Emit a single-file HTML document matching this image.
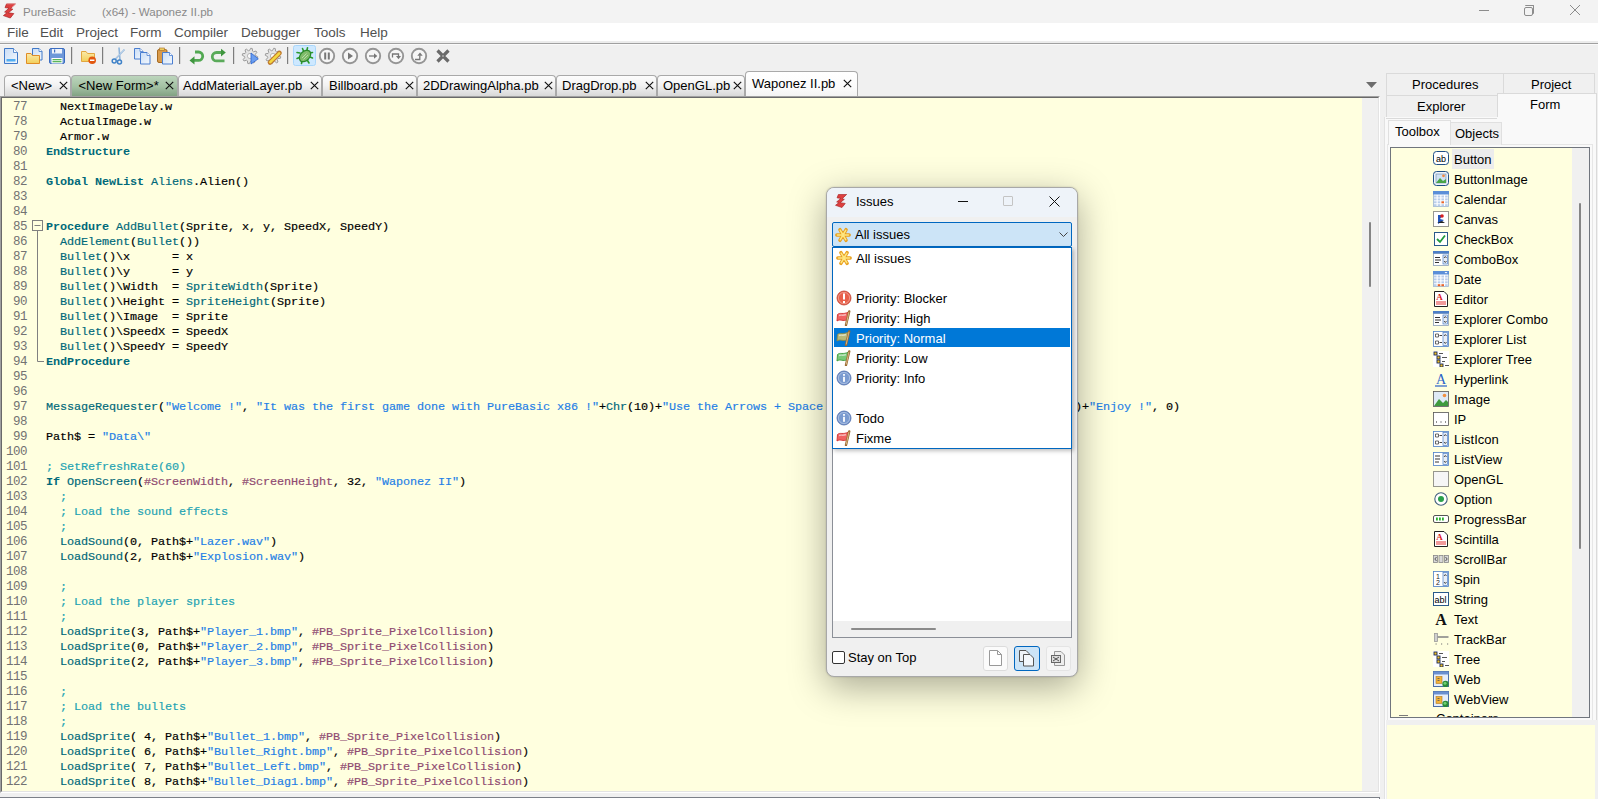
<!DOCTYPE html>
<html><head><meta charset="utf-8">
<style>
*{margin:0;padding:0;box-sizing:border-box}
html,body{width:1598px;height:799px;overflow:hidden;background:#f0f0f0;font-family:"Liberation Sans",sans-serif;font-size:13px;color:#000}
div,span,svg{position:absolute}
.tb{white-space:pre}
#title{left:0;top:0;width:1598px;height:23px;background:#f3f3f3}
#menu{left:0;top:23px;width:1598px;height:21px;background:linear-gradient(#fff 0,#fff 18px,#ececec 18px);border-bottom:1px solid #a0a0a0;box-shadow:0 1px 0 #fafafa}
.mi{top:2px;font-size:13.5px;color:#505050;white-space:pre}
.sep{top:49px;width:1px;height:15px;background:#8a8a8a}
.tab{top:75px;height:22px;border:1px solid #a9a9a9;border-bottom:none;border-radius:4px 4px 0 0;background:linear-gradient(#fdfdfd 0%,#f2f2f2 45%,#d6d6d6 100%);font-size:13px;white-space:pre}
.tab span{top:3px;white-space:pre}
.tab .x{top:3px;font-size:12px}
#edb{left:0;top:96px;width:1380px;height:697px;border:1px solid #a0a0a0;border-right-color:#fff;border-bottom-color:#fff;background:#f0f0f0}
#edb2{left:1px;top:97px;width:1378px;height:695px;border:1px solid #696969;border-right-color:#e3e3e3;border-bottom-color:#e3e3e3;background:#f0f0f0}
#code{left:2px;top:98px;width:1360px;height:693px;background:#ffffdf;overflow:hidden}
.cl{left:44px;height:15px;font-family:"Liberation Mono",monospace;font-size:11.8px;letter-spacing:-0.08px;-webkit-text-stroke:0.18px;line-height:15px;white-space:pre;color:#000}
.ln{left:0;width:25px;text-align:right;height:15px;font-family:"Liberation Mono",monospace;font-size:12.5px;letter-spacing:-0.5px;line-height:15px;color:#727272}
.k{color:#00697a;font-weight:bold;position:static;-webkit-text-stroke:0}
.f{color:#00697a;position:static}
.s{color:#1f7fe6;position:static}
.c{color:#1ea3b3;position:static}
.p{color:#8e4a70;position:static}
.rtab{height:22px;border:1px solid #dadada;background:#f0f0f0;font-size:13px;white-space:pre}
.ti{left:1432px;height:20px;width:150px}
.tic{left:0;top:2px;width:16px;height:16px}
.tt{left:22px;top:3px;font-size:13px;white-space:pre}
#dlg{left:826px;top:187px;width:252px;height:490px;background:#f0f0f0;border:1px solid #a8a8a8;border-radius:8px;box-shadow:0 0 2px rgba(0,0,0,0.2),0 10px 36px rgba(0,0,0,0.34);overflow:hidden}
.dli{left:5px;height:20px;width:236px;font-size:13px}
.dli span{left:23px;top:3px;white-space:pre}
.dli svg{left:2px;top:2px}
</style></head><body>
<div id="title">
<svg style="left:0;top:0" width="18" height="20" viewBox="0 0 18 20"><path d="M6.5 4 L15.3 4 L10.5 8.6 L12.8 9.2 L8.3 12.8 L13.8 13.6 L10.3 18 L3.4 15.6 L7.2 12.6 L4.6 12 L9 8.2 L5 7.6 Z" fill="#de4040" stroke="#a82020" stroke-width="0.7" stroke-linejoin="round"/><path d="M6.5 4 L15.3 4 L12 7" fill="none" stroke="#f08080" stroke-width="0.8"/></svg>
<span class="tb" style="left:23px;top:5px;font-size:11.6px;color:#8a8a8a">PureBasic</span>
<span class="tb" style="left:102px;top:5px;font-size:11.6px;color:#8a8a8a">(x64) - Waponez II.pb</span>
<div style="left:1479px;top:10px;width:10px;height:1px;background:#8c8c8c"></div>
<div style="left:1524px;top:7px;width:9px;height:9px;border:1px solid #8c8c8c;border-radius:2px"></div>
<div style="left:1525px;top:5px;width:9px;height:9px;border-top:1px solid #8c8c8c;border-right:1px solid #8c8c8c;border-radius:1px"></div>
<svg style="left:1570px;top:5px" width="10" height="10"><path d="M0 0 L10 10 M10 0 L0 10" stroke="#8c8c8c" stroke-width="1"/></svg>
</div>
<div id="menu">
<span class="mi" style="left:7px">File</span><span class="mi" style="left:40px">Edit</span><span class="mi" style="left:76px">Project</span><span class="mi" style="left:130px">Form</span><span class="mi" style="left:174px">Compiler</span><span class="mi" style="left:241px">Debugger</span><span class="mi" style="left:314px">Tools</span><span class="mi" style="left:360px">Help</span>
</div>
<svg style="left:0;top:44px" width="460" height="26" viewBox="0 44 460 26">
<defs><linearGradient id="gdoc" x1="0" y1="0" x2="1" y2="1"><stop offset="0" stop-color="#c9ddf6"/><stop offset="1" stop-color="#f4f8fd"/></linearGradient>
<linearGradient id="gfold" x1="0" y1="0" x2="0" y2="1"><stop offset="0" stop-color="#fbeaa8"/><stop offset="1" stop-color="#f2cf5a"/></linearGradient></defs>
<path d="M4.5 48.5 H13.5 L17.5 52.5 V63.5 H4.5 Z" fill="url(#gdoc)" stroke="#3f78c8"/><path d="M13.5 48.5 V52.5 H17.5" fill="#fff" stroke="#3f78c8" stroke-width="0.8"/>
<rect x="6.5" y="59" width="9" height="2.5" fill="#52aef2"/>
<path d="M32.5 48.5 H39.0 L42.0 51.5 V60.0 H32.5 Z" fill="url(#gdoc)" stroke="#3f78c8"/><path d="M39.0 48.5 V51.5 H42.0" fill="#fff" stroke="#3f78c8" stroke-width="0.8"/>
<path d="M26.5 53.5 H31 L32.5 55.5 H39.5 V63.5 H26.5 Z" fill="url(#gfold)" stroke="#e08c26"/>
<rect x="49.5" y="48.5" width="15" height="15" rx="1.5" fill="#6d98d9" stroke="#3b6cc0"/>
<rect x="52" y="49" width="10" height="4.5" fill="#eef3fb"/><rect x="54" y="49.5" width="1.2" height="3" fill="#3b6cc0"/>
<rect x="51.5" y="58" width="11" height="5.5" fill="#fff"/><rect x="52.5" y="59" width="9" height="1.3" fill="#5bb55b"/><rect x="52.5" y="61" width="9" height="1.3" fill="#5bb55b"/>
<rect x="71" y="47" width="1.2" height="17" fill="#7d7d7d"/>
<rect x="102" y="47" width="1.2" height="17" fill="#7d7d7d"/>
<rect x="179" y="47" width="1.2" height="17" fill="#7d7d7d"/>
<rect x="233" y="47" width="1.2" height="17" fill="#7d7d7d"/>
<rect x="287" y="47" width="1.2" height="17" fill="#7d7d7d"/>
<path d="M81.5 51.5 H86 L87.5 53.5 H94.5 V61.5 H81.5 Z" fill="url(#gfold)" stroke="#e2a640"/>
<circle cx="92.2" cy="60.2" r="3.8" fill="#e2570f"/><rect x="90" y="59.5" width="4.4" height="1.5" fill="#fff"/>
<path d="M115 59.5 L124.5 49.5 M120 60 L119 47.5" stroke="#8fb4da" stroke-width="1.6"/><path d="M115 59.5 L124.5 49.5" stroke="#d8e6f4" stroke-width="0.6"/>
<circle cx="114.2" cy="61" r="2" fill="none" stroke="#3f82c8" stroke-width="1.5"/><circle cx="119.5" cy="62" r="2" fill="none" stroke="#3f82c8" stroke-width="1.5"/>
<path d="M134.5 48.5 H140.0 L143.0 51.5 V59.0 H134.5 Z" fill="url(#gdoc)" stroke="#4a7ed0"/><path d="M140.0 48.5 V51.5 H143.0" fill="#fff" stroke="#4a7ed0" stroke-width="0.8"/>
<path d="M140.5 52.5 H147.0 L150.0 55.5 V64.0 H140.5 Z" fill="url(#gdoc)" stroke="#4a7ed0"/><path d="M147.0 52.5 V55.5 H150.0" fill="#fff" stroke="#4a7ed0" stroke-width="0.8"/>
<rect x="157.5" y="49.5" width="9.5" height="13" rx="1.5" fill="#d99a4a" stroke="#a56a22"/><rect x="159.5" y="48" width="5" height="2.5" fill="#eccd62" stroke="#a56a22" stroke-width="0.6"/>
<path d="M162.5 52.5 H169.5 L172.5 55.5 V64.0 H162.5 Z" fill="url(#gdoc)" stroke="#4a7ed0"/><path d="M169.5 52.5 V55.5 H172.5" fill="#fff" stroke="#4a7ed0" stroke-width="0.8"/>
<path d="M195 52 H198.5 A4.2 4.2 0 0 1 198.5 60.4 H194" fill="none" stroke="#52a852" stroke-width="2.8"/><path d="M194.5 56.2 L189.5 60.5 L194.5 64.5 Z" fill="#3f963f"/>
<path d="M222 52.5 H216.5 A4.2 4.2 0 0 0 216.5 60.9 H224.5" fill="none" stroke="#5aaa5a" stroke-width="2.8"/><path d="M221 48.8 L225.8 52.5 L221 56.5 Z" fill="#3f963f"/>
<polygon points="257.76,56.76 257.46,58.26 254.85,58.59 254.25,59.49 254.95,62.03 253.68,62.88 251.60,61.26 250.54,61.47 249.24,63.76 247.74,63.46 247.41,60.85 246.51,60.25 243.97,60.95 243.12,59.68 244.74,57.60 244.53,56.54 242.24,55.24 242.54,53.74 245.15,53.41 245.75,52.51 245.05,49.97 246.32,49.12 248.40,50.74 249.46,50.53 250.76,48.24 252.26,48.54 252.59,51.15 253.49,51.75 256.03,51.05 256.88,52.32 255.26,54.40 255.47,55.46" fill="#e4e4e4" stroke="#9c9c9c" stroke-width="1"/><circle cx="250" cy="56" r="2.6" fill="#fafafa" stroke="#a8a8a8" stroke-width="0.8"/>
<path d="M251 53 L258.3 58.8 L251 64 Z" fill="#6a9ef0" stroke="#2a62d0" stroke-width="0.8"/>
<polygon points="280.76,56.76 280.46,58.26 277.85,58.59 277.25,59.49 277.95,62.03 276.68,62.88 274.60,61.26 273.54,61.47 272.24,63.76 270.74,63.46 270.41,60.85 269.51,60.25 266.97,60.95 266.12,59.68 267.74,57.60 267.53,56.54 265.24,55.24 265.54,53.74 268.15,53.41 268.75,52.51 268.05,49.97 269.32,49.12 271.40,50.74 272.46,50.53 273.76,48.24 275.26,48.54 275.59,51.15 276.49,51.75 279.03,51.05 279.88,52.32 278.26,54.40 278.47,55.46" fill="#e4e4e4" stroke="#9c9c9c" stroke-width="1"/><circle cx="273" cy="56" r="2.6" fill="#fafafa" stroke="#a8a8a8" stroke-width="0.8"/>
<path d="M270 62.5 L279.5 53" stroke="#c07a30" stroke-width="4.6" stroke-linecap="round"/><path d="M270.3 62.2 L279.2 53.3" stroke="#f4d840" stroke-width="2.6" stroke-linecap="round"/>
<rect x="293.5" y="45.5" width="22" height="20" rx="2" fill="#cde8ff" stroke="#a8d6fb"/>
<g stroke="#2a9a2a" stroke-width="1.6" stroke-linecap="round"><path d="M300 53 L297 52.5 M299.5 57.5 L297 58.5 M302 61 L301.5 63.5 M303.5 51 L302.5 48.5 M307 50 L307.5 47.8 M309.5 53 L312.5 52.5 M310 57 L312.5 58 M307.5 60.5 L309 63"/></g>
<ellipse cx="305" cy="56" rx="4.6" ry="6.6" transform="rotate(45 305 56)" fill="#7fba6a" stroke="#2a8a2a" stroke-width="1.3"/><path d="M302 58 L306.5 53.5 M303.5 59.5 L308 55" stroke="#b8e0a8" stroke-width="0.9"/>
<circle cx="327" cy="56" r="7.2" fill="#f6f6f6" stroke="#959595" stroke-width="1.9"/><rect x="324.2" y="52.5" width="2" height="7" fill="#777"/><rect x="327.8" y="52.5" width="2" height="7" fill="#777"/>
<circle cx="350" cy="56" r="7.2" fill="#f6f6f6" stroke="#959595" stroke-width="1.9"/><path d="M348 52.5 L353 56 L348 59.5 Z" fill="#777"/>
<circle cx="373" cy="56" r="7.2" fill="#f6f6f6" stroke="#959595" stroke-width="1.9"/><path d="M369 56 H375.5" stroke="#777" stroke-width="1.3"/><path d="M374 53.3 L377.3 56 L374 58.7 Z" fill="#777"/>
<circle cx="396" cy="56" r="7.2" fill="#f6f6f6" stroke="#959595" stroke-width="1.9"/><path d="M392.5 57.5 V54 H398.5 V56" fill="none" stroke="#777" stroke-width="1.3"/><path d="M396 56 L401 56 L398.5 59.3 Z" fill="#777"/>
<circle cx="419" cy="56" r="7.2" fill="#f6f6f6" stroke="#959595" stroke-width="1.9"/><path d="M415 59.5 H419.8 V55.5" fill="none" stroke="#777" stroke-width="1.3"/><path d="M417.3 55.8 L420 52.5 L422.7 55.8 Z" fill="#777"/>
<path d="M437.5 50.5 L448.5 61.5 M448.5 50.5 L437.5 61.5" stroke="#6a6a6a" stroke-width="3.2"/><rect x="442" y="55" width="2" height="2" fill="#999"/>
</svg>
<div class="tab" style="left:4px;top:75px;width:67.0px;height:22px;"></div>
<span class="tb" style="left:11px;top:78px;font-size:13px">&lt;New&gt;</span>
<svg style="left:58.5px;top:81px" width="9" height="9"><path d="M0.8 0.8 L8.2 8.2 M8.2 0.8 L0.8 8.2" stroke="#111" stroke-width="1.15"/></svg>
<div class="tab" style="left:71px;top:75px;width:106.5px;height:22px;background:linear-gradient(#bcd5bc,#a4c2a4 50%,#7f9f80);"></div>
<span class="tb" style="left:78.5px;top:78px;font-size:13px">&lt;New Form&gt;*</span>
<svg style="left:165px;top:81px" width="9" height="9"><path d="M0.8 0.8 L8.2 8.2 M8.2 0.8 L0.8 8.2" stroke="#111" stroke-width="1.15"/></svg>
<div class="tab" style="left:177.5px;top:75px;width:144.8px;height:22px;"></div>
<span class="tb" style="left:183px;top:78px;font-size:13px">AddMaterialLayer.pb</span>
<svg style="left:309.5px;top:81px" width="9" height="9"><path d="M0.8 0.8 L8.2 8.2 M8.2 0.8 L0.8 8.2" stroke="#111" stroke-width="1.15"/></svg>
<div class="tab" style="left:322.3px;top:75px;width:95.1px;height:22px;"></div>
<span class="tb" style="left:329px;top:78px;font-size:13px">Billboard.pb</span>
<svg style="left:404.5px;top:81px" width="9" height="9"><path d="M0.8 0.8 L8.2 8.2 M8.2 0.8 L0.8 8.2" stroke="#111" stroke-width="1.15"/></svg>
<div class="tab" style="left:417.4px;top:75px;width:138.6px;height:22px;"></div>
<span class="tb" style="left:423px;top:78px;font-size:13px">2DDrawingAlpha.pb</span>
<svg style="left:543.5px;top:81px" width="9" height="9"><path d="M0.8 0.8 L8.2 8.2 M8.2 0.8 L0.8 8.2" stroke="#111" stroke-width="1.15"/></svg>
<div class="tab" style="left:556px;top:75px;width:101.0px;height:22px;"></div>
<span class="tb" style="left:562px;top:78px;font-size:13px">DragDrop.pb</span>
<svg style="left:644.5px;top:81px" width="9" height="9"><path d="M0.8 0.8 L8.2 8.2 M8.2 0.8 L0.8 8.2" stroke="#111" stroke-width="1.15"/></svg>
<div class="tab" style="left:657px;top:75px;width:87.5px;height:22px;"></div>
<span class="tb" style="left:663px;top:78px;font-size:13px">OpenGL.pb</span>
<svg style="left:733px;top:81px" width="9" height="9"><path d="M0.8 0.8 L8.2 8.2 M8.2 0.8 L0.8 8.2" stroke="#111" stroke-width="1.15"/></svg>
<div class="tab" style="left:744.5px;top:71px;width:113.1px;height:26px;background:linear-gradient(#ffffff,#fbfbfb 60%,#f3f3f3);"></div>
<span class="tb" style="left:752px;top:76px;font-size:13px">Waponez II.pb</span>
<svg style="left:843px;top:79px" width="9" height="9"><path d="M0.8 0.8 L8.2 8.2 M8.2 0.8 L0.8 8.2" stroke="#111" stroke-width="1.15"/></svg>
<div id="edb"></div><div id="edb2"></div>
<div id="code">
<div class="ln" style="top:2px">77</div>
<div class="ln" style="top:17px">78</div>
<div class="ln" style="top:32px">79</div>
<div class="ln" style="top:47px">80</div>
<div class="ln" style="top:62px">81</div>
<div class="ln" style="top:77px">82</div>
<div class="ln" style="top:92px">83</div>
<div class="ln" style="top:107px">84</div>
<div class="ln" style="top:122px">85</div>
<div class="ln" style="top:137px">86</div>
<div class="ln" style="top:152px">87</div>
<div class="ln" style="top:167px">88</div>
<div class="ln" style="top:182px">89</div>
<div class="ln" style="top:197px">90</div>
<div class="ln" style="top:212px">91</div>
<div class="ln" style="top:227px">92</div>
<div class="ln" style="top:242px">93</div>
<div class="ln" style="top:257px">94</div>
<div class="ln" style="top:272px">95</div>
<div class="ln" style="top:287px">96</div>
<div class="ln" style="top:302px">97</div>
<div class="ln" style="top:317px">98</div>
<div class="ln" style="top:332px">99</div>
<div class="ln" style="top:347px">100</div>
<div class="ln" style="top:362px">101</div>
<div class="ln" style="top:377px">102</div>
<div class="ln" style="top:392px">103</div>
<div class="ln" style="top:407px">104</div>
<div class="ln" style="top:422px">105</div>
<div class="ln" style="top:437px">106</div>
<div class="ln" style="top:452px">107</div>
<div class="ln" style="top:467px">108</div>
<div class="ln" style="top:482px">109</div>
<div class="ln" style="top:497px">110</div>
<div class="ln" style="top:512px">111</div>
<div class="ln" style="top:527px">112</div>
<div class="ln" style="top:542px">113</div>
<div class="ln" style="top:557px">114</div>
<div class="ln" style="top:572px">115</div>
<div class="ln" style="top:587px">116</div>
<div class="ln" style="top:602px">117</div>
<div class="ln" style="top:617px">118</div>
<div class="ln" style="top:632px">119</div>
<div class="ln" style="top:647px">120</div>
<div class="ln" style="top:662px">121</div>
<div class="ln" style="top:677px">122</div>
<div class="cl" style="top:2px">  NextImageDelay.w</div>
<div class="cl" style="top:17px">  ActualImage.w</div>
<div class="cl" style="top:32px">  Armor.w</div>
<div class="cl" style="top:47px"><span class="k">EndStructure</span></div>
<div class="cl" style="top:62px"></div>
<div class="cl" style="top:77px"><span class="k">Global</span> <span class="k">NewList</span> <span class="f">Aliens</span>.Alien()</div>
<div class="cl" style="top:92px"></div>
<div class="cl" style="top:107px"></div>
<div class="cl" style="top:122px"><span class="k">Procedure</span> <span class="f">AddBullet</span>(Sprite, x, y, SpeedX, SpeedY)</div>
<div class="cl" style="top:137px">  <span class="f">AddElement</span>(<span class="f">Bullet</span>())</div>
<div class="cl" style="top:152px">  <span class="f">Bullet</span>()\x      = x</div>
<div class="cl" style="top:167px">  <span class="f">Bullet</span>()\y      = y</div>
<div class="cl" style="top:182px">  <span class="f">Bullet</span>()\Width  = <span class="f">SpriteWidth</span>(Sprite)</div>
<div class="cl" style="top:197px">  <span class="f">Bullet</span>()\Height = <span class="f">SpriteHeight</span>(Sprite)</div>
<div class="cl" style="top:212px">  <span class="f">Bullet</span>()\Image  = Sprite</div>
<div class="cl" style="top:227px">  <span class="f">Bullet</span>()\SpeedX = SpeedX</div>
<div class="cl" style="top:242px">  <span class="f">Bullet</span>()\SpeedY = SpeedY</div>
<div class="cl" style="top:257px"><span class="k">EndProcedure</span></div>
<div class="cl" style="top:272px"></div>
<div class="cl" style="top:287px"></div>
<div class="cl" style="top:302px"><span class="f">MessageRequester</span>(<span class="s">&quot;Welcome !&quot;</span>, <span class="s">&quot;It was the first game done with PureBasic x86 !&quot;</span>+<span class="f">Chr</span>(10)+<span class="s">&quot;Use the Arrows + Space to shoot at the aliens !!!!&quot;</span>+<span class="f">Chr</span>(10)+<span class="s">&quot;Enjoy !&quot;</span>, 0)</div>
<div class="cl" style="top:317px"></div>
<div class="cl" style="top:332px">Path$ = <span class="s">&quot;Data\&quot;</span></div>
<div class="cl" style="top:347px"></div>
<div class="cl" style="top:362px"><span class="c">; SetRefreshRate(60)</span></div>
<div class="cl" style="top:377px"><span class="k">If</span> <span class="f">OpenScreen</span>(<span class="p">#ScreenWidth</span>, <span class="p">#ScreenHeight</span>, 32, <span class="s">&quot;Waponez II&quot;</span>)</div>
<div class="cl" style="top:392px">  <span class="c">;</span></div>
<div class="cl" style="top:407px">  <span class="c">; Load the sound effects</span></div>
<div class="cl" style="top:422px">  <span class="c">;</span></div>
<div class="cl" style="top:437px">  <span class="f">LoadSound</span>(0, Path$+<span class="s">&quot;Lazer.wav&quot;</span>)</div>
<div class="cl" style="top:452px">  <span class="f">LoadSound</span>(2, Path$+<span class="s">&quot;Explosion.wav&quot;</span>)</div>
<div class="cl" style="top:467px"></div>
<div class="cl" style="top:482px">  <span class="c">;</span></div>
<div class="cl" style="top:497px">  <span class="c">; Load the player sprites</span></div>
<div class="cl" style="top:512px">  <span class="c">;</span></div>
<div class="cl" style="top:527px">  <span class="f">LoadSprite</span>(3, Path$+<span class="s">&quot;Player_1.bmp&quot;</span>, <span class="p">#PB_Sprite_PixelCollision</span>)</div>
<div class="cl" style="top:542px">  <span class="f">LoadSprite</span>(0, Path$+<span class="s">&quot;Player_2.bmp&quot;</span>, <span class="p">#PB_Sprite_PixelCollision</span>)</div>
<div class="cl" style="top:557px">  <span class="f">LoadSprite</span>(2, Path$+<span class="s">&quot;Player_3.bmp&quot;</span>, <span class="p">#PB_Sprite_PixelCollision</span>)</div>
<div class="cl" style="top:572px"></div>
<div class="cl" style="top:587px">  <span class="c">;</span></div>
<div class="cl" style="top:602px">  <span class="c">; Load the bullets</span></div>
<div class="cl" style="top:617px">  <span class="c">;</span></div>
<div class="cl" style="top:632px">  <span class="f">LoadSprite</span>( 4, Path$+<span class="s">&quot;Bullet_1.bmp&quot;</span>, <span class="p">#PB_Sprite_PixelCollision</span>)</div>
<div class="cl" style="top:647px">  <span class="f">LoadSprite</span>( 6, Path$+<span class="s">&quot;Bullet_Right.bmp&quot;</span>, <span class="p">#PB_Sprite_PixelCollision</span>)</div>
<div class="cl" style="top:662px">  <span class="f">LoadSprite</span>( 7, Path$+<span class="s">&quot;Bullet_Left.bmp&quot;</span>, <span class="p">#PB_Sprite_PixelCollision</span>)</div>
<div class="cl" style="top:677px">  <span class="f">LoadSprite</span>( 8, Path$+<span class="s">&quot;Bullet_Diag1.bmp&quot;</span>, <span class="p">#PB_Sprite_PixelCollision</span>)</div>
<svg style="left:0;top:0" width="50" height="694"><rect x="30.5" y="122.5" width="10" height="10" fill="none" stroke="#808080"/><path d="M32.5 127.5 H38.5 M35.5 133 V263.5 H42" fill="none" stroke="#808080"/></svg>
</div>

<div style="left:1369px;top:222px;width:2px;height:65px;background:#858585;border-radius:1px"></div>
<svg style="left:1366px;top:82px" width="11" height="6"><path d="M0 0 H11 L5.5 6 Z" fill="#6d6d6d"/></svg>
<div style="left:0;top:797px;width:1380px;height:3px;border-top:1px solid #7c8088;border-right:1px solid #7c8088;background:#fff"></div>
<div style="left:1380px;top:72px;width:218px;height:727px;background:#f0f0f0"></div>
<div style="left:1384px;top:117px;width:1px;height:682px;background:#e2e2e2"></div><div style="left:1385px;top:117px;width:1px;height:682px;background:#fdfdfd"></div>
<div class="rtab" style="left:1386px;top:73px;width:118px;height:23px"></div>
<div class="rtab" style="left:1503px;top:73px;width:92px;height:23px"></div>
<span class="tb" style="left:1412px;top:77px">Procedures</span>
<span class="tb" style="left:1531px;top:77px">Project</span>
<div class="rtab" style="left:1386px;top:95px;width:112px;height:23px"></div>
<div class="rtab" style="left:1497px;top:93px;width:100px;height:26px;background:#f9f9f9;border-bottom:none"></div>
<span class="tb" style="left:1417px;top:99px">Explorer</span>
<span class="tb" style="left:1530px;top:97px">Form</span>
<div style="left:1385px;top:117px;width:212px;height:603px;background:#f9f9f9;border-right:1px solid #dadada"></div>
<div style="left:1386px;top:118px;width:111px;height:1px;background:#dadada"></div>
<div style="left:1387px;top:144px;width:206px;height:576px;background:#f9f9f9;border:1px solid #e6e6e6;border-bottom:none"></div>
<div style="left:1450px;top:122px;width:52px;height:23px;background:#f0f0f0;border:1px solid #e0e0e0;border-bottom:none"></div>
<div style="left:1388px;top:120px;width:63px;height:25px;background:#f9f9f9;border:1px solid #e0e0e0;border-bottom:none"></div>
<span class="tb" style="left:1395px;top:124px">Toolbox</span>
<span class="tb" style="left:1455px;top:126px">Objects</span>
<div style="left:1390px;top:147px;width:200px;height:571px;background:#ffffdf;border:1px solid #70757d;overflow:hidden"></div>
<div style="left:1572px;top:148px;width:17px;height:569px;background:#f0f0f0"></div>
<div style="left:1579px;top:203px;width:2px;height:346px;background:#858585;border-radius:1px"></div>
<div style="left:1452px;top:149px;width:42px;height:20px;background:#ececec"></div>
<svg style="left:1433px;top:151px" width="16" height="16"><rect x="0.5" y="0.5" width="15" height="13" rx="3" fill="#fff" stroke="#1f4f86"/><text x="8" y="10.5" font-size="9" text-anchor="middle" font-family="Liberation Sans" fill="#000">ab</text></svg>
<span class="tb" style="left:1454px;top:152px">Button</span>
<svg style="left:1433px;top:171px" width="16" height="16"><rect x="0.5" y="0.5" width="15" height="14" rx="3" fill="#eef4fb" stroke="#1f4f86"/><rect x="3" y="3" width="10" height="9" fill="#cfe0f2" stroke="#6b88a8" stroke-width="0.6"/><path d="M3 12 L7 7 L10 10 L13 8 V12 Z" fill="#48a548"/><circle cx="10.5" cy="4.8" r="1.4" fill="#f08a40"/></svg>
<span class="tb" style="left:1454px;top:172px">ButtonImage</span>
<svg style="left:1433px;top:191px" width="16" height="16"><rect x="0.5" y="0.5" width="15" height="15" fill="#fff" stroke="#9bb3cf" stroke-width="0.8"/><rect x="0" y="0" width="16" height="3.5" fill="#5b8fd8"/><rect x="1.0" y="4.5" width="2.6" height="2" fill="#b9cdea"/><rect x="1.0" y="7.4" width="2.6" height="2" fill="#b9cdea"/><rect x="1.0" y="10.3" width="2.6" height="2" fill="#b9cdea"/><rect x="1.0" y="13.2" width="2.6" height="2" fill="#b9cdea"/><rect x="4.7" y="4.5" width="2.6" height="2" fill="#b9cdea"/><rect x="4.7" y="7.4" width="2.6" height="2" fill="#b9cdea"/><rect x="4.7" y="10.3" width="2.6" height="2" fill="#b9cdea"/><rect x="4.7" y="13.2" width="2.6" height="2" fill="#b9cdea"/><rect x="8.4" y="4.5" width="2.6" height="2" fill="#b9cdea"/><rect x="8.4" y="7.4" width="2.6" height="2" fill="#b9cdea"/><rect x="8.4" y="10.3" width="2.6" height="2" fill="#e8642a"/><rect x="8.4" y="13.2" width="2.6" height="2" fill="#b9cdea"/><rect x="12.1" y="4.5" width="2.6" height="2" fill="#b9cdea"/><rect x="12.1" y="7.4" width="2.6" height="2" fill="#b9cdea"/><rect x="12.1" y="10.3" width="2.6" height="2" fill="#b9cdea"/><rect x="12.1" y="13.2" width="2.6" height="2" fill="#b9cdea"/></svg>
<span class="tb" style="left:1454px;top:192px">Calendar</span>
<svg style="left:1433px;top:211px" width="16" height="16"><rect x="0.5" y="0.5" width="15" height="15" fill="#fff" stroke="#333" stroke-dasharray="1 1"/><path d="M5 4 L10 4 L7 8 L11 9 L5 13 Z" fill="#2255bb"/><circle cx="9" cy="5" r="1.8" fill="#d82020"/><path d="M4 12 L9 10 L12 12 Z" fill="#222"/></svg>
<span class="tb" style="left:1454px;top:212px">Canvas</span>
<svg style="left:1433px;top:231px" width="16" height="16"><rect x="1.5" y="1.5" width="13" height="13" fill="#fff" stroke="#2a5a8a"/><path d="M4 8 L7 11 L12 4.5" fill="none" stroke="#1f9a3a" stroke-width="1.8"/></svg>
<span class="tb" style="left:1454px;top:232px">CheckBox</span>
<svg style="left:1433px;top:251px" width="16" height="16"><rect x="0.5" y="2.5" width="15" height="12" fill="#fff" stroke="#8aa0b8" stroke-width="0.8"/><rect x="0" y="0" width="16" height="2.5" fill="#4c7fc8"/><path d="M2 6.5 H7 M2 9 H8 M2 11.5 H6" stroke="#333" stroke-width="1"/><rect x="10" y="4" width="4.5" height="9" fill="#e8eef6" stroke="#4c7fc8" stroke-width="0.7"/><path d="M11 7 L12.3 5.5 L13.5 7 M11 10 L12.3 11.5 L13.5 10" fill="none" stroke="#222" stroke-width="0.8"/></svg>
<span class="tb" style="left:1454px;top:252px">ComboBox</span>
<svg style="left:1433px;top:271px" width="16" height="16"><rect x="0.5" y="0.5" width="15" height="15" fill="#fff" stroke="#9bb3cf" stroke-width="0.8"/><rect x="0" y="0" width="16" height="3.5" fill="#5b8fd8"/><rect x="1.0" y="4.5" width="2.6" height="2" fill="#b9cdea"/><rect x="1.0" y="7.4" width="2.6" height="2" fill="#b9cdea"/><rect x="1.0" y="10.3" width="2.6" height="2" fill="#b9cdea"/><rect x="1.0" y="13.2" width="2.6" height="2" fill="#b9cdea"/><rect x="4.7" y="4.5" width="2.6" height="2" fill="#b9cdea"/><rect x="4.7" y="7.4" width="2.6" height="2" fill="#b9cdea"/><rect x="4.7" y="10.3" width="2.6" height="2" fill="#b9cdea"/><rect x="4.7" y="13.2" width="2.6" height="2" fill="#e8642a"/><rect x="8.4" y="4.5" width="2.6" height="2" fill="#b9cdea"/><rect x="8.4" y="7.4" width="2.6" height="2" fill="#b9cdea"/><rect x="8.4" y="10.3" width="2.6" height="2" fill="#b9cdea"/><rect x="8.4" y="13.2" width="2.6" height="2" fill="#e8642a"/><rect x="12.1" y="4.5" width="2.6" height="2" fill="#b9cdea"/><rect x="12.1" y="7.4" width="2.6" height="2" fill="#b9cdea"/><rect x="12.1" y="10.3" width="2.6" height="2" fill="#b9cdea"/><rect x="12.1" y="13.2" width="2.6" height="2" fill="#b9cdea"/><path d="M11.5 1 L13 2.5 L14.5 1 Z" fill="#fff"/></svg>
<span class="tb" style="left:1454px;top:272px">Date</span>
<svg style="left:1433px;top:291px" width="16" height="16"><path d="M1.5 0.5 H11 L14.5 4 V15.5 H1.5 Z" fill="#fff" stroke="#222"/><text x="6.5" y="9" font-size="9" font-weight="bold" text-anchor="middle" font-family="Liberation Serif" fill="#e02020">A</text><path d="M3 11 H13 M3 13 H13" stroke="#e02020" stroke-width="0.9"/></svg>
<span class="tb" style="left:1454px;top:292px">Editor</span>
<svg style="left:1433px;top:311px" width="16" height="16"><rect x="0.5" y="2.5" width="15" height="12" fill="#fff" stroke="#8aa0b8" stroke-width="0.8"/><rect x="0" y="0" width="16" height="2.5" fill="#4c7fc8"/><path d="M2 6.5 H7 M2 9 H8 M2 11.5 H6" stroke="#333" stroke-width="1"/><rect x="10" y="4" width="4.5" height="9" fill="#e8eef6" stroke="#4c7fc8" stroke-width="0.7"/><path d="M11 7 L12.3 5.5 L13.5 7 M11 10 L12.3 11.5 L13.5 10" fill="none" stroke="#222" stroke-width="0.8"/></svg>
<span class="tb" style="left:1454px;top:312px">Explorer Combo</span>
<svg style="left:1433px;top:331px" width="16" height="16"><rect x="0.5" y="0.5" width="15" height="15" fill="#fff" stroke="#4c7fc8" stroke-width="0.8"/><path d="M2.5 3 h3 v3 h-3 Z M2.5 10 h3 v3 h-3 Z" fill="none" stroke="#444" stroke-width="0.8"/><path d="M6.5 4.5 H9 M6.5 11.5 H9" stroke="#444"/><rect x="10" y="1.5" width="4.5" height="13" fill="#e8eef6" stroke="#4c7fc8" stroke-width="0.7"/><path d="M11 5 L12.3 3.5 L13.5 5 M11 11 L12.3 12.5 L13.5 11" fill="none" stroke="#222" stroke-width="0.8"/></svg>
<span class="tb" style="left:1454px;top:332px">Explorer List</span>
<svg style="left:1433px;top:351px" width="16" height="16"><rect x="0" y="0" width="16" height="16" fill="#fff"/><rect x="1" y="1" width="3" height="3" fill="#f2c020" stroke="#1a2a5a" stroke-width="0.9"/><path d="M6 2.5 h4" stroke="#555" stroke-width="1"/><rect x="4" y="5" width="3" height="3" fill="#f2c020" stroke="#1a2a5a" stroke-width="0.9"/><path d="M9 6.5 h5" stroke="#555" stroke-width="1"/><rect x="4" y="9" width="3" height="3" fill="#f2c020" stroke="#1a2a5a" stroke-width="0.9"/><path d="M9 10.5 h3" stroke="#555" stroke-width="1"/><rect x="7" y="13" width="3" height="3" fill="#f2c020" stroke="#1a2a5a" stroke-width="0.9"/><path d="M12 14.5 h4" stroke="#555" stroke-width="1"/></svg>
<span class="tb" style="left:1454px;top:352px">Explorer Tree</span>
<svg style="left:1433px;top:371px" width="16" height="16"><text x="8" y="12.5" font-size="14" text-anchor="middle" font-family="Liberation Serif" fill="#2a62c8">A</text><path d="M2 15 H14" stroke="#2a62c8" stroke-width="1.2"/></svg>
<span class="tb" style="left:1454px;top:372px">Hyperlink</span>
<svg style="left:1433px;top:391px" width="16" height="16"><rect x="0.5" y="0.5" width="15" height="15" fill="#dfeaf6" stroke="#555" stroke-width="0.8"/><path d="M1 15 L6 8 L10 12 L13 9 L15 11 V15 Z" fill="#3f9a3f"/><circle cx="11.5" cy="4.5" r="1.8" fill="#f09040"/></svg>
<span class="tb" style="left:1454px;top:392px">Image</span>
<svg style="left:1433px;top:411px" width="16" height="16"><rect x="0.5" y="1.5" width="15" height="13" fill="#fff" stroke="#555" stroke-width="0.8"/><path d="M3 11 h1 M7.5 11 h1 M12 11 h1" stroke="#222" stroke-width="1.2"/></svg>
<span class="tb" style="left:1454px;top:412px">IP</span>
<svg style="left:1433px;top:431px" width="16" height="16"><rect x="0.5" y="0.5" width="15" height="15" fill="#fff" stroke="#4c7fc8" stroke-width="0.8"/><path d="M2.5 3 h3 v3 h-3 Z M2.5 10 h3 v3 h-3 Z" fill="none" stroke="#444" stroke-width="0.8"/><path d="M6.5 4.5 H9 M6.5 11.5 H9" stroke="#444"/><rect x="10" y="1.5" width="4.5" height="13" fill="#e8eef6" stroke="#4c7fc8" stroke-width="0.7"/><path d="M11 5 L12.3 3.5 L13.5 5 M11 11 L12.3 12.5 L13.5 11" fill="none" stroke="#222" stroke-width="0.8"/></svg>
<span class="tb" style="left:1454px;top:432px">ListIcon</span>
<svg style="left:1433px;top:451px" width="16" height="16"><rect x="0.5" y="1.5" width="15" height="13" fill="#fff" stroke="#4c7fc8" stroke-width="0.8"/><path d="M2 5 H7 M2 8 H7 M2 11 H6" stroke="#333"/><rect x="10" y="2.5" width="4.5" height="11" fill="#e8eef6" stroke="#4c7fc8" stroke-width="0.7"/><path d="M11 6 L12.3 4.5 L13.5 6 M11 10 L12.3 11.5 L13.5 10" fill="none" stroke="#222" stroke-width="0.8"/></svg>
<span class="tb" style="left:1454px;top:452px">ListView</span>
<svg style="left:1433px;top:471px" width="16" height="16"><rect x="0.5" y="0.5" width="15" height="15" fill="#f6f6f6" stroke="#333" stroke-dasharray="1 1"/></svg>
<span class="tb" style="left:1454px;top:472px">OpenGL</span>
<svg style="left:1433px;top:491px" width="16" height="16"><circle cx="8" cy="8" r="6.2" fill="#fff" stroke="#44607e" stroke-width="1.1"/><circle cx="8" cy="8" r="3" fill="#2aa04a"/></svg>
<span class="tb" style="left:1454px;top:492px">Option</span>
<svg style="left:1433px;top:511px" width="16" height="16"><rect x="0.5" y="4.5" width="15" height="7" rx="1.5" fill="#fff" stroke="#555"/><rect x="3" y="6.5" width="1.8" height="3" fill="#2ab02a"/><rect x="6" y="6.5" width="1.8" height="3" fill="#2ab02a"/><rect x="9" y="6.5" width="1.8" height="3" fill="#2ab02a"/></svg>
<span class="tb" style="left:1454px;top:512px">ProgressBar</span>
<svg style="left:1433px;top:531px" width="16" height="16"><path d="M1.5 0.5 H11 L14.5 4 V15.5 H1.5 Z" fill="#fff" stroke="#222"/><text x="6.5" y="9" font-size="9" font-weight="bold" text-anchor="middle" font-family="Liberation Serif" fill="#e02020">A</text><path d="M3 11 H13 M3 13 H13" stroke="#e02020" stroke-width="0.9"/></svg>
<span class="tb" style="left:1454px;top:532px">Scintilla</span>
<svg style="left:1433px;top:551px" width="16" height="16"><rect x="0.5" y="4.5" width="4" height="7" fill="#d8d8d8" stroke="#888" stroke-width="0.8"/><rect x="6" y="4.5" width="4" height="7" fill="#d8d8d8" stroke="#888" stroke-width="0.8"/><rect x="11.5" y="4.5" width="4" height="7" fill="#d8d8d8" stroke="#888" stroke-width="0.8"/><path d="M3.5 6 L1.8 8 L3.5 10 M12.5 6 L14.2 8 L12.5 10" fill="none" stroke="#444" stroke-width="0.9"/></svg>
<span class="tb" style="left:1454px;top:552px">ScrollBar</span>
<svg style="left:1433px;top:571px" width="16" height="16"><rect x="0.5" y="0.5" width="15" height="15" fill="#fff" stroke="#4c7fc8" stroke-width="0.8"/><text x="5" y="7.5" font-size="7" text-anchor="middle" font-family="Liberation Sans" fill="#222">1</text><text x="5" y="14" font-size="7" text-anchor="middle" font-family="Liberation Sans" fill="#222">2</text><rect x="10" y="1.5" width="4.5" height="13" fill="#e8eef6" stroke="#4c7fc8" stroke-width="0.7"/><path d="M11 5 L12.3 3.5 L13.5 5 M11 11 L12.3 12.5 L13.5 11" fill="none" stroke="#222" stroke-width="0.8"/></svg>
<span class="tb" style="left:1454px;top:572px">Spin</span>
<svg style="left:1433px;top:591px" width="16" height="16"><rect x="0.5" y="1.5" width="15" height="13" fill="#fff" stroke="#2a5a8a"/><text x="7.5" y="11.5" font-size="9" text-anchor="middle" font-family="Liberation Sans" fill="#000">abl</text></svg>
<span class="tb" style="left:1454px;top:592px">String</span>
<svg style="left:1433px;top:611px" width="16" height="16"><text x="8" y="14" font-size="16" font-weight="bold" text-anchor="middle" font-family="Liberation Serif" fill="#111">A</text></svg>
<span class="tb" style="left:1454px;top:612px">Text</span>
<svg style="left:1433px;top:631px" width="16" height="16"><path d="M2 6 H15.5" stroke="#8a8a8a" stroke-width="1.6"/><rect x="1.5" y="2.5" width="3" height="8" fill="#d0d0d0" stroke="#999" stroke-width="0.8"/><path d="M2.5 13 h1.2 M8 13 h1.2 M14 13 h1.2" stroke="#777" stroke-width="1.2"/></svg>
<span class="tb" style="left:1454px;top:632px">TrackBar</span>
<svg style="left:1433px;top:651px" width="16" height="16"><rect x="0" y="0" width="16" height="16" fill="#fff"/><rect x="1" y="1" width="3" height="3" fill="#f2c020" stroke="#1a2a5a" stroke-width="0.9"/><path d="M6 2.5 h4" stroke="#555" stroke-width="1"/><rect x="4" y="5" width="3" height="3" fill="#f2c020" stroke="#1a2a5a" stroke-width="0.9"/><path d="M9 6.5 h5" stroke="#555" stroke-width="1"/><rect x="4" y="9" width="3" height="3" fill="#f2c020" stroke="#1a2a5a" stroke-width="0.9"/><path d="M9 10.5 h3" stroke="#555" stroke-width="1"/><rect x="7" y="13" width="3" height="3" fill="#f2c020" stroke="#1a2a5a" stroke-width="0.9"/><path d="M12 14.5 h4" stroke="#555" stroke-width="1"/></svg>
<span class="tb" style="left:1454px;top:652px">Tree</span>
<svg style="left:1433px;top:671px" width="16" height="16"><rect x="0.5" y="0.5" width="15" height="15" fill="#e6eefa" stroke="#4a6ea8"/><rect x="0.5" y="0.5" width="15" height="3" fill="#6a90d0"/><rect x="3" y="5.5" width="6" height="7" fill="#f2b23a" stroke="#b07a20" stroke-width="0.6"/><path d="M4.5 7.5 h2 M4.5 9.5 h2" stroke="#555" stroke-width="0.8"/><circle cx="12.5" cy="13" r="3.2" fill="#2a8a3a"/><circle cx="12" cy="12.3" r="1.5" fill="#6fcf6f"/></svg>
<span class="tb" style="left:1454px;top:672px">Web</span>
<svg style="left:1433px;top:691px" width="16" height="16"><rect x="0.5" y="0.5" width="15" height="15" fill="#e6eefa" stroke="#4a6ea8"/><rect x="0.5" y="0.5" width="15" height="3" fill="#6a90d0"/><rect x="3" y="5.5" width="6" height="7" fill="#f2b23a" stroke="#b07a20" stroke-width="0.6"/><path d="M4.5 7.5 h2 M4.5 9.5 h2" stroke="#555" stroke-width="0.8"/><circle cx="12.5" cy="13" r="3.2" fill="#2a8a3a"/><circle cx="12" cy="12.3" r="1.5" fill="#6fcf6f"/></svg>
<span class="tb" style="left:1454px;top:692px">WebView</span>
<div style="left:1391px;top:710px;width:181px;height:7px;overflow:hidden"><div style="left:8px;top:5px;width:9px;height:1px;background:#7a7a7a"></div><span class="tb" style="left:45px;top:1px">Containers</span></div>
<div style="left:1387px;top:725px;width:208px;height:74px;background:#ffffdf"></div>
<div id="dlg">
<div style="left:0;top:0;width:251px;height:29px;background:#eef3f9"></div>
<svg style="left:8px;top:6px" width="12" height="14" viewBox="3 3.5 12.5 15"><path d="M6.5 4 L15.3 4 L10.5 8.6 L12.8 9.2 L8.3 12.8 L13.8 13.6 L10.3 18 L3.4 15.6 L7.2 12.6 L4.6 12 L9 8.2 L5 7.6 Z" fill="#de4040" stroke="#a82020" stroke-width="0.7" stroke-linejoin="round"/></svg>
<span class="tb" style="left:29px;top:6px;font-size:13px">Issues</span>
<div style="left:131px;top:13px;width:10px;height:1px;background:#111"></div>
<div style="left:176px;top:8px;width:10px;height:10px;border:1px solid #c4c4c4;border-radius:1px"></div>
<svg style="left:222px;top:8px" width="11" height="11"><path d="M0.5 0.5 L10.5 10.5 M10.5 0.5 L0.5 10.5" stroke="#111" stroke-width="1"/></svg>
<div style="left:5px;top:59px;width:240px;height:391px;background:#fff;border:1px solid #8b8f97"></div>
<div style="left:6px;top:433px;width:238px;height:16px;background:#f0f0f0"></div>
<div style="left:24px;top:440px;width:85px;height:2px;background:#8a8a8a;border-radius:1px"></div>
<div style="left:5px;top:34px;width:240px;height:25px;background:#cce4f7;border:1px solid #0067c0;border-radius:2px"></div>
<svg style="left:8px;top:39px" width="16" height="16"><g stroke="#e8a020" stroke-width="3.4" stroke-linecap="round"><path d="M1.8 8 H14.2 M4.9 2.6 L11.1 13.4 M11.1 2.6 L4.9 13.4"/></g><g stroke="#ffe680" stroke-width="1.6" stroke-linecap="round"><path d="M2.5 8 H13.5 M5.3 3.3 L10.7 12.7 M10.7 3.3 L5.3 12.7"/></g></svg>
<span class="tb" style="left:28px;top:39px">All issues</span>
<svg style="left:232px;top:44px" width="9" height="6"><path d="M0.5 0.5 L4.5 4.5 L8.5 0.5" fill="none" stroke="#444" stroke-width="1"/></svg>
<div style="left:5px;top:59px;width:240px;height:202px;background:#fff;border:1px solid #0067c0;box-shadow:2px 2px 4px rgba(0,0,0,0.25)"></div>
<div style="left:7px;top:140px;width:236px;height:19px;background:#0078d7"></div>
<svg style="left:9px;top:62px" width="16" height="16"><g stroke="#e8a020" stroke-width="3.4" stroke-linecap="round"><path d="M1.8 8 H14.2 M4.9 2.6 L11.1 13.4 M11.1 2.6 L4.9 13.4"/></g><g stroke="#ffe680" stroke-width="1.6" stroke-linecap="round"><path d="M2.5 8 H13.5 M5.3 3.3 L10.7 12.7 M10.7 3.3 L5.3 12.7"/></g></svg>
<span class="tb" style="left:29px;top:63px;color:#000">All issues</span>
<svg style="left:9px;top:102px" width="16" height="16"><circle cx="8" cy="8" r="7" fill="#e8604a" stroke="#c04030" stroke-width="0.8"/><circle cx="8" cy="8" r="5.6" fill="none" stroke="#fff" stroke-opacity="0.5" stroke-width="0.7"/><rect x="7" y="3.5" width="2" height="6" fill="#fff"/><rect x="7" y="11" width="2" height="2" fill="#fff"/></svg>
<span class="tb" style="left:29px;top:103px;color:#000">Priority: Blocker</span>
<svg style="left:9px;top:122px" width="16" height="16"><path d="M1.5 4.5 C4 2 7 5 12.5 2 L11.5 9.5 C7 12 4 8.5 1 11 Z" fill="#f06262" stroke="#d03030" stroke-width="0.9"/><path d="M3 5.5 C5 4.5 7 6 10 4.5" stroke="#fff" stroke-opacity="0.55" stroke-width="1.4" fill="none"/><path d="M13.2 1.5 L10 15" stroke="#9a6a30" stroke-width="2.4" stroke-linecap="round"/><path d="M13 1.8 L10.2 14.5" stroke="#e8c898" stroke-width="0.8"/></svg>
<span class="tb" style="left:29px;top:123px;color:#000">Priority: High</span>
<svg style="left:9px;top:142px" width="16" height="16"><path d="M1.5 4.5 C4 2 7 5 12.5 2 L11.5 9.5 C7 12 4 8.5 1 11 Z" fill="#b8b878" stroke="#8a8a4a" stroke-width="0.9"/><path d="M3 5.5 C5 4.5 7 6 10 4.5" stroke="#fff" stroke-opacity="0.55" stroke-width="1.4" fill="none"/><path d="M13.2 1.5 L10 15" stroke="#9a6a30" stroke-width="2.4" stroke-linecap="round"/><path d="M13 1.8 L10.2 14.5" stroke="#e8c898" stroke-width="0.8"/></svg>
<span class="tb" style="left:29px;top:143px;color:#fff">Priority: Normal</span>
<svg style="left:9px;top:162px" width="16" height="16"><path d="M1.5 4.5 C4 2 7 5 12.5 2 L11.5 9.5 C7 12 4 8.5 1 11 Z" fill="#78c878" stroke="#3a9a3a" stroke-width="0.9"/><path d="M3 5.5 C5 4.5 7 6 10 4.5" stroke="#fff" stroke-opacity="0.55" stroke-width="1.4" fill="none"/><path d="M13.2 1.5 L10 15" stroke="#9a6a30" stroke-width="2.4" stroke-linecap="round"/><path d="M13 1.8 L10.2 14.5" stroke="#e8c898" stroke-width="0.8"/></svg>
<span class="tb" style="left:29px;top:163px;color:#000">Priority: Low</span>
<svg style="left:9px;top:182px" width="16" height="16"><circle cx="8" cy="8" r="7" fill="#7a9ad0" stroke="#4a68a8" stroke-width="0.8"/><circle cx="8" cy="8" r="5.6" fill="none" stroke="#fff" stroke-opacity="0.5" stroke-width="0.7"/><rect x="7.1" y="4" width="1.8" height="1.8" fill="#fff"/><rect x="7.1" y="6.8" width="1.8" height="5" fill="#fff"/></svg>
<span class="tb" style="left:29px;top:183px;color:#000">Priority: Info</span>
<svg style="left:9px;top:222px" width="16" height="16"><circle cx="8" cy="8" r="7" fill="#7a9ad0" stroke="#4a68a8" stroke-width="0.8"/><circle cx="8" cy="8" r="5.6" fill="none" stroke="#fff" stroke-opacity="0.5" stroke-width="0.7"/><rect x="7.1" y="4" width="1.8" height="1.8" fill="#fff"/><rect x="7.1" y="6.8" width="1.8" height="5" fill="#fff"/></svg>
<span class="tb" style="left:29px;top:223px;color:#000">Todo</span>
<svg style="left:9px;top:242px" width="16" height="16"><path d="M1.5 4.5 C4 2 7 5 12.5 2 L11.5 9.5 C7 12 4 8.5 1 11 Z" fill="#f06262" stroke="#d03030" stroke-width="0.9"/><path d="M3 5.5 C5 4.5 7 6 10 4.5" stroke="#fff" stroke-opacity="0.55" stroke-width="1.4" fill="none"/><path d="M13.2 1.5 L10 15" stroke="#9a6a30" stroke-width="2.4" stroke-linecap="round"/><path d="M13 1.8 L10.2 14.5" stroke="#e8c898" stroke-width="0.8"/></svg>
<span class="tb" style="left:29px;top:243px;color:#000">Fixme</span>
<div style="left:5px;top:463px;width:13px;height:13px;background:#fff;border:1px solid #333;border-radius:2px"></div>
<span class="tb" style="left:21px;top:462px">Stay on Top</span>
<div style="left:156px;top:458px;width:25px;height:25px;background:#fbfbfb;border:1px solid #dcdcdc;border-radius:3px"></div>
<div style="left:187px;top:458px;width:26px;height:25px;background:#cce4f7;border:1px solid #0067c0;border-radius:3px"></div>
<div style="left:219px;top:458px;width:25px;height:25px;background:#f6f6f6;border:1px solid #e4e4e4;border-radius:3px"></div>
<svg style="left:161px;top:462px" width="16" height="17"><path d="M1.5 0.5 H9.5 L13.5 4.5 V15.5 H1.5 Z" fill="#fff" stroke="#999"/><path d="M9.5 0.5 V4.5 H13.5" fill="none" stroke="#999"/></svg>
<svg style="left:192px;top:462px" width="16" height="17"><path d="M0.5 0.5 H7 L10 3.5 V11.5 H0.5 Z" fill="#eef3f8" stroke="#555"/><path d="M4.5 4.5 H11 L14.5 8 V16 H4.5 Z" fill="#f4f8fc" stroke="#555"/></svg>
<svg style="left:223px;top:462px" width="16" height="17"><path d="M4.5 1.5 H11 L14.5 5 V15.5 H4.5 Z" fill="#eee" stroke="#999"/><rect x="1.5" y="5.5" width="9" height="7" fill="#ddd" stroke="#666"/><path d="M3 7 L9 11 M9 7 L3 11" stroke="#444" stroke-width="0.9"/></svg>
</div>
</body></html>
